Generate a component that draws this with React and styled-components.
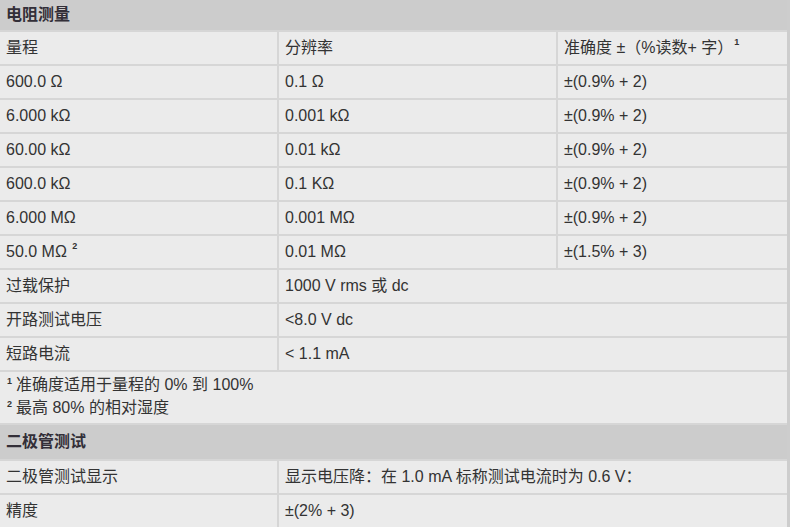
import React from "react";
import styled, { createGlobalStyle } from "styled-components";

const Global = createGlobalStyle`
  html, body { margin: 0; padding: 0; background: #ffffff; }
  body { font-family: "Liberation Sans", "Noto Sans CJK SC", sans-serif; }
`;

const Sheet = styled.div`
  width: 787px;
  display: grid;
  grid-template-columns: 277px 277px 229px;
  column-gap: 2px;
  row-gap: 2px;
  background: #d6d6d6;
  border-right: 3px solid #cdcdcd;
  font-size: 16px;
  color: #333333;
`;

const SectionHeader = styled.div`
  grid-column: 1 / -1;
  height: ${(p) => p.$h}px;
  display: flex;
  align-items: center;
  padding: 0 6px;
  background: #cccccc;
  font-weight: bold;
  color: #332f38;
  font-size: 16px;
  line-height: 20px;
`;

const Cell = styled.div`
  grid-column: span ${(p) => p.$span || 1};
  height: 32px;
  display: flex;
  align-items: center;
  padding: 0 6px;
  background: #ebebeb;
  white-space: nowrap;
  line-height: 20px;
`;

const NoteCell = styled.div`
  grid-column: 1 / -1;
  background: #ebebeb;
  padding: 1px 6px 4px;
  line-height: 23px;
`;

const NoteLine = styled.div`
  height: 23px;
  white-space: nowrap;
`;

const Sup = styled.span`
  display: inline-block;
  font-size: 9px;
  font-weight: bold;
  line-height: 0;
  position: relative;
  top: -6px;
  margin: 0 4px 0 1px;
`;

const rows = [
  ["600.0 Ω", "0.1 Ω", "±(0.9% + 2)"],
  ["6.000 kΩ", "0.001 kΩ", "±(0.9% + 2)"],
  ["60.00 kΩ", "0.01 kΩ", "±(0.9% + 2)"],
  ["600.0 kΩ", "0.1 KΩ", "±(0.9% + 2)"],
  ["6.000 MΩ", "0.001 MΩ", "±(0.9% + 2)"],
];

const pairs = [
  ["过载保护", "1000 V rms 或 dc"],
  ["开路测试电压", "<8.0 V dc"],
  ["短路电流", "< 1.1 mA"],
];

export default function App() {
  return (
    <>
      <Global />
      <Sheet>
        <SectionHeader $h={30}>电阻测量</SectionHeader>
        <Cell>量程</Cell>
        <Cell>分辨率</Cell>
        <Cell>
          准确度 ±（%读数+ 字）<Sup>1</Sup>
        </Cell>
        {rows.map((r, i) => (
          <React.Fragment key={i}>
            <Cell>{r[0]}</Cell>
            <Cell>{r[1]}</Cell>
            <Cell>{r[2]}</Cell>
          </React.Fragment>
        ))}
        <Cell>
          50.0 MΩ&nbsp;<Sup>2</Sup>
        </Cell>
        <Cell>0.01 MΩ</Cell>
        <Cell>±(1.5% + 3)</Cell>
        {pairs.map((p, i) => (
          <React.Fragment key={i}>
            <Cell>{p[0]}</Cell>
            <Cell $span={2}>{p[1]}</Cell>
          </React.Fragment>
        ))}
        <NoteCell>
          <NoteLine>
            <Sup>1</Sup>准确度适用于量程的 0% 到 100%
          </NoteLine>
          <NoteLine>
            <Sup>2</Sup>最高 80% 的相对湿度
          </NoteLine>
        </NoteCell>
        <SectionHeader $h={34}>二极管测试</SectionHeader>
        <Cell>二极管测试显示</Cell>
        <Cell $span={2}>显示电压降：在 1.0 mA 标称测试电流时为 0.6 V：</Cell>
        <Cell>精度</Cell>
        <Cell $span={2}>±(2% + 3)</Cell>
      </Sheet>
    </>
  );
}
